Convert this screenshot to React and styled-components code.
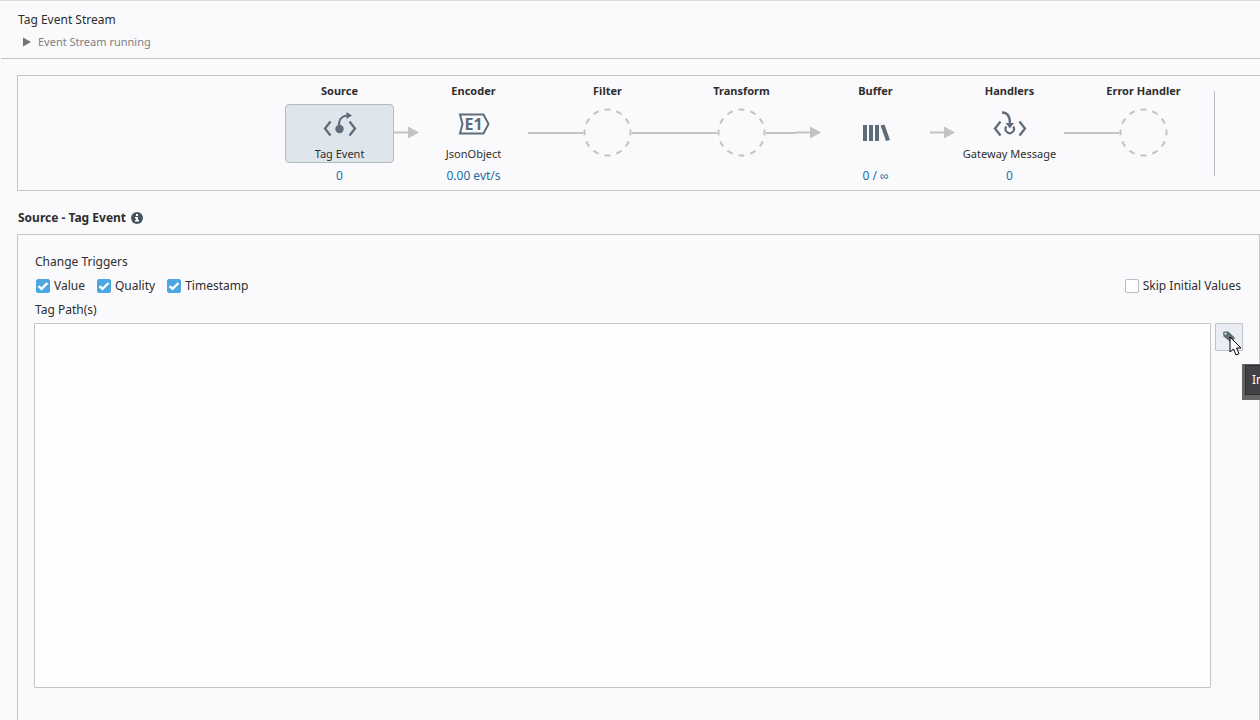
import React from "react";
import styled, { createGlobalStyle, css } from "styled-components";

const GlobalStyle = createGlobalStyle`
  * {
    box-sizing: border-box;
  }

  body {
    margin: 0;
    background: #fafafc;
    color: #2e2e2e;
    font-family: "Noto Sans", sans-serif;
    font-size: 12px;
    line-height: 16px;
  }
`;

const Page = styled.div`
  display: flex;
  flex-direction: column;
  height: 100vh;
  min-height: 480px;
  overflow: hidden;
  border-top: 1px solid #dcdcdc;
`;

const Header = styled.header`
  margin-left: 1px;
  padding: 10px 17px 8px;
  border-bottom: 1px solid #c4c4c6;
`;

const Title = styled.h1`
  margin: 0;
  font-size: 12px;
  font-weight: 400;
  line-height: 18px;
`;

const Status = styled.p`
  display: flex;
  align-items: center;
  gap: 7px;
  margin: 5px 0 0 5px;
  color: #808080;
  font-size: 11px;
`;

const Main = styled.main`
  flex: 1;
  display: flex;
  flex-direction: column;
  min-height: 0;
  padding-left: 17px;
`;

const Pipeline = styled.section`
  display: flex;
  justify-content: flex-end;
  margin-top: 16px;
  padding: 7px 45px 6px 0;
  border: 1px solid #c4c4c6;
  border-right: none;
`;

const Stage = styled.div`
  display: flex;
  flex-direction: column;
  align-items: center;
  width: 109px;
`;

const StageTitle = styled.h2`
  margin: 0 0 5px;
  font-size: 11px;
  font-weight: 700;
  line-height: 16px;
`;

const StageNode = styled.button`
  display: flex;
  flex-direction: column;
  align-items: center;
  justify-content: space-between;
  width: 100%;
  height: 59px;
  padding: 4px 0 0;
  border: 1px solid transparent;
  border-radius: 4px;
  background: none;
  color: #2e2e2e;
  font: inherit;
  font-size: 11px;
  line-height: 16px;
  white-space: nowrap;

  ${({ $selected }) =>
    $selected &&
    css`
      border-color: #b4bcbe;
      background: #dee6eb;
    `}
`;

const EmptyNode = styled.div`
  display: flex;
  align-items: center;
  width: 100%;
  height: 57px;
`;

const Wire = styled.span`
  flex: 1;
  height: 2px;
  background: ${({ $hidden }) => ($hidden ? "transparent" : "#c3c3c3")};
`;

const StageCount = styled.span`
  margin-top: 5px;
  color: #1b6ea3;
  line-height: 16px;
`;

const Connector = styled.div`
  display: flex;
  align-items: center;
  width: 25px;
  height: 57px;
  margin-top: 21px;
`;

const Divider = styled.div`
  width: 1px;
  margin: 8px 0 8px 16px;
  background: #b9bec0;
`;

const SectionTitle = styled.h2`
  display: flex;
  align-items: center;
  gap: 5px;
  margin: 19px 0 8px 1px;
  font-size: 12px;
  font-weight: 700;
  line-height: 16px;
`;

const Panel = styled.section`
  flex: 1;
  display: flex;
  flex-direction: column;
  min-height: 0;
  padding: 19px 16px 32px;
  border: 1px solid #c4c4c6;
  border-bottom: none;
`;

const TriggerGroup = styled.fieldset`
  min-width: 0;
  margin: 0;
  padding: 0;
  border: none;
`;

const Legend = styled.legend`
  padding: 0 0 0 1px;
  line-height: 16px;
`;

const CheckRow = styled.div`
  display: flex;
  gap: 12px;
  margin: 8px 2px;
`;

const CheckLabel = styled.label`
  display: flex;
  align-items: center;
  gap: 4px;
  margin-left: ${({ $end }) => ($end ? "auto" : "0")};
`;

const Checkbox = styled.input`
  flex: none;
  appearance: none;
  width: 14px;
  height: 14px;
  margin: 0;
  border: 1px solid #bcbcc0;
  border-radius: 2px;
  background: #fff;

  &:checked {
    border-color: #4ba6e2;
    background: #4ba6e2
      url("data:image/svg+xml,%3Csvg xmlns='http://www.w3.org/2000/svg' viewBox='0 0 12 12'%3E%3Cpath d='M1.500 6.200l3 2.700L10.500 3' fill='none' stroke='white' stroke-width='2.400'/%3E%3C/svg%3E");
  }
`;

const PathLabel = styled.label`
  padding-left: 1px;
`;

const PathRow = styled.div`
  flex: 1;
  display: flex;
  align-items: flex-start;
  gap: 4px;
  margin-top: 5px;
  min-height: 0;
`;

const PathInput = styled.textarea`
  flex: 1;
  align-self: stretch;
  margin: 0;
  padding: 4px;
  border: 1px solid #c4c4c6;
  border-radius: 1px;
  background: #fefffc;
  font: inherit;
  resize: none;
`;

const BrowseSlot = styled.div`
  position: relative;
`;

const BrowseButton = styled.button`
  display: block;
  width: 28px;
  height: 28px;
  padding: 6px;
  border: 1px solid #c0c3cb;
  border-radius: 1px;
  background: #eaedf4;
`;

const Cursor = styled.svg`
  position: absolute;
  top: 13px;
  left: 14px;
`;

const Tooltip = styled.div`
  position: absolute;
  top: 41px;
  left: 27px;
  padding: 1px 5px 5px 3px;
  background: #656565;
`;

const TooltipText = styled.div`
  padding: 7px 6px;
  border: 1px solid #2e2e30;
  background: #414146;
  color: #fff;
  line-height: 14px;
  white-space: nowrap;
`;

function SourceIcon() {
  return (
    <svg width="34" height="30" viewBox="0 0 34 30" fill="none" stroke="#5f6d7a">
      <path d="M7.500 12.500L2 19.500l5.500 7M26.500 12.500l5.500 7-5.500 7" strokeWidth="2.300" />
      <path d="M16 18C15.500 10.500 18 7 25 6.500" strokeWidth="2.200" />
      <circle cx="16.500" cy="20" r="4.200" fill="#5f6d7a" stroke="none" />
      <path d="M23.500 3l5.500 3.500-5.500 3.500z" fill="#5f6d7a" stroke="none" />
    </svg>
  );
}

function HandlerIcon() {
  return (
    <svg width="34" height="30" viewBox="0 0 34 30" fill="none" stroke="#5f6d7a">
      <path d="M7.500 12.500L2 19.500l5.500 7M26.500 12.500l5.500 7-5.500 7" strokeWidth="2.300" />
      <path d="M9 3.500c5.500 0 8 3.500 8 11" strokeWidth="2.300" />
      <path d="M12.500 14h8.500l-4.200 5.500z" fill="#5f6d7a" stroke="none" />
      <path d="M13.300 17.500a4.200 4.200 0 1 0 6.900 0" strokeWidth="2.200" />
    </svg>
  );
}

function EncoderIcon() {
  return (
    <svg width="34" height="30" viewBox="0 0 34 30">
      <path
        d="M3 5.500h23.500l5 9.500-5 9.500H3l2.500-9.500z"
        fill="none"
        stroke="#5f6d7a"
        strokeWidth="2"
      />
      <text x="16.500" y="21" textAnchor="middle" fill="#5f6d7a" fontSize="16" fontWeight="700">
        E1
      </text>
    </svg>
  );
}

function BufferIcon() {
  return (
    <svg width="34" height="46" viewBox="0 0 34 46" fill="#5f6d7a">
      <path d="M4 16h4v16H4zM10 16h4v16h-4zM16 16h4v16h-4zM21.500 16.500l4-1L31 31l-4 1z" />
    </svg>
  );
}

function EmptyRing() {
  return (
    <svg width="49" height="49" viewBox="0 0 49 49" fill="none" stroke="#c3c3c3" strokeWidth="2">
      <circle cx="24.500" cy="24.500" r="23" pathLength="120" strokeDasharray="5 5" strokeDashoffset="2.500" />
    </svg>
  );
}

function Arrow() {
  return (
    <svg width="25" height="13" viewBox="0 0 25 13" fill="#c3c3c3">
      <path d="M0 5.500h14V.5l11 6-11 6v-5H0z" />
    </svg>
  );
}

function InfoIcon() {
  return (
    <svg width="12" height="12" viewBox="0 0 12 12">
      <circle cx="6" cy="6" r="6" fill="#47545f" />
      <path d="M5 2h2v2H5zM4 5h3v3h1v1.500H4V8h1V6.500H4z" fill="#fff" />
    </svg>
  );
}

function TagIcon() {
  return (
    <svg width="14" height="14" viewBox="0 0 14 14">
      <path d="M1 2.500L2 1.500h4.500L13 8l-4 4.500L1.500 6.500z" fill="#5f6d7a" />
      <circle cx="3.500" cy="3.800" r="1" fill="#fff" />
    </svg>
  );
}

const stages = [
  { title: "Source", label: "Tag Event", count: "0", icon: <SourceIcon />, selected: true, next: "arrow" },
  { title: "Encoder", label: "JsonObject", count: "0.00 evt/s", icon: <EncoderIcon />, next: "line" },
  { title: "Filter", empty: true, next: "line" },
  { title: "Transform", empty: true, next: "arrow" },
  { title: "Buffer", count: "0 / ∞", icon: <BufferIcon />, next: "arrow" },
  { title: "Handlers", label: "Gateway Message", count: "0", icon: <HandlerIcon />, next: "line" },
  { title: "Error Handler", empty: true, last: true },
];

function PipelineStage({ stage }) {
  return (
    <Stage>
      <StageTitle>{stage.title}</StageTitle>
      {stage.empty ? (
        <EmptyNode>
          <Wire />
          <EmptyRing />
          <Wire $hidden={stage.last} />
        </EmptyNode>
      ) : (
        <StageNode type="button" aria-label={stage.title} $selected={stage.selected}>
          {stage.icon}
          {stage.label && <span>{stage.label}</span>}
        </StageNode>
      )}
      {stage.count && <StageCount>{stage.count}</StageCount>}
    </Stage>
  );
}

function App() {
  return (
    <Page>
      <GlobalStyle />
      <Header>
        <Title>Tag Event Stream</Title>
        <Status>
          <svg width="8" height="10" viewBox="0 0 8 10" fill="#747474">
            <path d="M0 0.500L8 5 0 9.500z" />
          </svg>
          Event Stream running
        </Status>
      </Header>
      <Main>
        <Pipeline>
          {stages.map((stage) => (
            <React.Fragment key={stage.title}>
              <PipelineStage stage={stage} />
              {!stage.last && (
                <Connector>{stage.next === "arrow" ? <Arrow /> : <Wire />}</Connector>
              )}
            </React.Fragment>
          ))}
          <Divider />
        </Pipeline>
        <SectionTitle>
          Source - Tag Event
          <InfoIcon />
        </SectionTitle>
        <Panel>
          <TriggerGroup>
            <Legend>Change Triggers</Legend>
            <CheckRow>
              <CheckLabel>
                <Checkbox type="checkbox" defaultChecked />
                Value
              </CheckLabel>
              <CheckLabel>
                <Checkbox type="checkbox" defaultChecked />
                Quality
              </CheckLabel>
              <CheckLabel>
                <Checkbox type="checkbox" defaultChecked />
                Timestamp
              </CheckLabel>
              <CheckLabel $end>
                <Checkbox type="checkbox" />
                Skip Initial Values
              </CheckLabel>
            </CheckRow>
          </TriggerGroup>
          <PathLabel htmlFor="tag-paths">Tag Path(s)</PathLabel>
          <PathRow>
            <PathInput id="tag-paths" />
            <BrowseSlot>
              <BrowseButton type="button" aria-label="Insert tag path">
                <TagIcon />
              </BrowseButton>
              <Cursor width="13" height="20" viewBox="0 0 13 20">
                <path
                  d="M1 1v15l3.500-3 2.500 6 3-1.300-2.500-5.700H12z"
                  fill="#fff"
                  stroke="#000"
                />
              </Cursor>
              <Tooltip role="tooltip">
                <TooltipText>Insert</TooltipText>
              </Tooltip>
            </BrowseSlot>
          </PathRow>
        </Panel>
      </Main>
    </Page>
  );
}

export default App;
